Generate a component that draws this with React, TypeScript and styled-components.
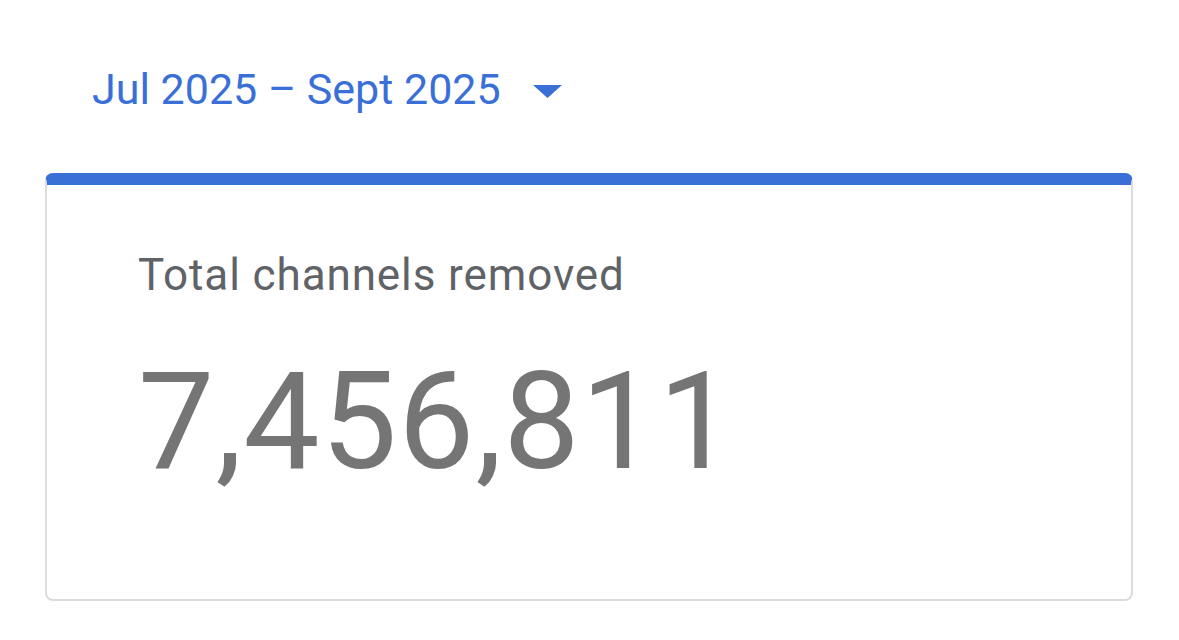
import React from "react";
import styled, { createGlobalStyle } from "styled-components";

const Global = createGlobalStyle`
  html, body { margin: 0; padding: 0; background: #ffffff; }
  body { font-family: Roboto, "Noto Sans", sans-serif; }
`;

const Page = styled.div`
  width: 1179px;
  height: 640px;
  box-sizing: border-box;
  padding: 66px 46px 0 45px;
  display: flex;
  flex-direction: column;
`;

const RangeButton = styled.button`
  display: flex;
  align-items: center;
  gap: 32px;
  background: none;
  border: none;
  padding: 0 0 0 47px;
  margin: 0;
  height: 46px;
  line-height: 46px;
  color: #3a6fd8;
  font-family: Roboto, "Noto Sans", sans-serif;
  font-size: 43px;
  font-weight: 400;
  cursor: pointer;
  align-self: flex-start;
`;

const Caret = styled.svg`
  width: 29px;
  height: 13px;
  margin-top: 5px;
`;

const Card = styled.section`
  margin-top: 61px;
  height: 428px;
  box-sizing: border-box;
  border: 2px solid #dcdcdc;
  border-top: 12px solid #3a6fd8;
  border-radius: 8px;
  padding: 65px 0 0 91px;
  display: flex;
  flex-direction: column;
`;

const Label = styled.div`
  color: #5f6368;
  font-size: 44px;
  line-height: 50px;
  letter-spacing: 0.9px;
`;

const Value = styled.div`
  margin-top: 47px;
  color: #757575;
  font-size: 136px;
  line-height: 150px;
  letter-spacing: 1px;
`;

export default function App() {
  return (
    <>
      <Global />
      <Page>
        <RangeButton>
          <span>Jul 2025 – Sept 2025</span>
          <Caret viewBox="0 0 29 13">
            <path d="M0 0 L29 0 L14.5 13 Z" fill="#3a6fd8" />
          </Caret>
        </RangeButton>
        <Card>
          <Label>Total channels removed</Label>
          <Value>7,456,811</Value>
        </Card>
      </Page>
    </>
  );
}
